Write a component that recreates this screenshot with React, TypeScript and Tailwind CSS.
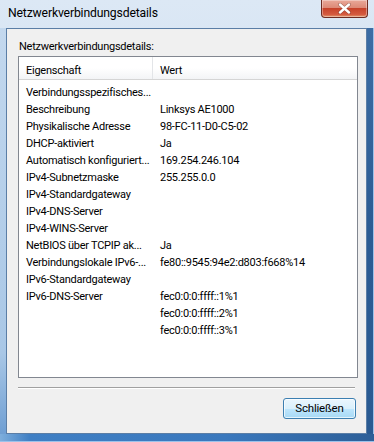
import React from "react";

const rows: [string, string][] = [
  ["Verbindungsspezifisches...", ""],
  ["Beschreibung", "Linksys AE1000"],
  ["Physikalische Adresse", "98-FC-11-D0-C5-02"],
  ["DHCP-aktiviert", "Ja"],
  ["Automatisch konfiguriert...", "169.254.246.104"],
  ["IPv4-Subnetzmaske", "255.255.0.0"],
  ["IPv4-Standardgateway", ""],
  ["IPv4-DNS-Server", ""],
  ["IPv4-WINS-Server", ""],
  ["NetBIOS über TCPIP ak...", "Ja"],
  ["Verbindungslokale IPv6-...", "fe80::9545:94e2:d803:f668%14"],
  ["IPv6-Standardgateway", ""],
  ["IPv6-DNS-Server", "fec0:0:0:ffff::1%1"],
  ["", "fec0:0:0:ffff::2%1"],
  ["", "fec0:0:0:ffff::3%1"],
];

export default function App() {
  return (
    <div
      className="w-[374px] h-[442px] flex flex-col relative overflow-hidden text-black bg-[linear-gradient(180deg,#dce8f5_0%,#cfe0f1_40%,#b7d0ea_100%)]"
      style={{ fontFamily: 'Roboto, "Liberation Sans", Arial, sans-serif' }}
    >
      {/* Title bar */}
      <div className="h-[28px] flex items-center pl-[8px] shrink-0">
        <span className="text-[12.2px] tracking-[-0.15px] leading-none text-black mt-[-1px]">Netzwerkverbindungsdetails</span>
      </div>
      {/* Close button */}
      <div className="absolute top-0 left-[321px] w-[47px] h-[18px] rounded-b-[4px] border border-t-0 border-[#6d2c22] bg-[linear-gradient(180deg,#e9a99a_0%,#dd8a77_45%,#c7432b_50%,#d45a3f_85%,#e49a6f_100%)] flex items-center justify-center shadow-[inset_0_0_0_1px_rgba(255,255,255,0.35)]">
        <svg width="13" height="11" viewBox="0 0 13 11">
          <path d="M2 1.5 L11 9.5 M11 1.5 L2 9.5" stroke="#5a2a22" strokeWidth="3.6" strokeLinecap="round" opacity="0.5" />
          <path d="M2 1.5 L11 9.5 M11 1.5 L2 9.5" stroke="#ffffff" strokeWidth="2.4" strokeLinecap="round" />
        </svg>
      </div>
      {/* Body */}
      <div className="flex flex-1 min-h-0">
        <div className="w-[6px] bg-[linear-gradient(180deg,#c3d8ee,#a9c7e6_80%,#6f9fd3)]" />
        <div className="w-[361px] border border-[#5b7ea6] bg-[#f0f0f0] flex flex-col">
          <div className="pl-[12px] pt-[10px] h-[27px] text-[11px] tracking-[-0.25px] leading-[15px]">Netzwerkverbindungsdetails:</div>
          <div className="ml-[11px] w-[340px] h-[322px] border border-[#828790] bg-white flex flex-col text-[11px] tracking-[-0.25px] leading-[17px]">
            <div className="h-[23px] flex border-b border-[#d5d5d5] bg-[linear-gradient(180deg,#ffffff_0%,#ffffff_50%,#f3f4f6_100%)]">
              <div className="w-[134px] border-r border-[#e3e5e8] pl-[7px] pt-[5px]">Eigenschaft</div>
              <div className="flex-1 pl-[7px] pt-[5px]">Wert</div>
            </div>
            <div className="pt-[4px] flex flex-col">
              {rows.map(([k, v], i) => (
                <div key={i} className="h-[17px] flex whitespace-nowrap">
                  <div className="w-[134px] pl-[7px] overflow-hidden">{k}</div>
                  <div className="flex-1 pl-[7px]">{v}</div>
                </div>
              ))}
            </div>
          </div>
          <div className="ml-[11px] w-[337px] mt-[9px] h-[2px] border-t border-[#a0a0a0] border-b border-b-white" />
          <div className="flex justify-end pr-[10px] mt-[9px]">
            <button className="w-[73px] h-[21px] rounded-[3px] border border-[#3c7fb1] text-[11.5px] tracking-[-0.2px] leading-none text-black bg-[linear-gradient(180deg,#eaf6fd_0%,#d9f0fc_50%,#bee6fd_51%,#a7d9f5_100%)] shadow-[inset_0_0_0_1px_rgba(255,255,255,0.7)]">
              Schließen
            </button>
          </div>
        </div>
        <div className="w-[7px] flex">
          <div className="w-[6px] bg-[linear-gradient(180deg,#3d6da4,#2b5c94_50%,#2a5a92)]" />
          <div className="w-[1px] bg-[#9cc2ea]" />
        </div>
      </div>
      <div className="h-[8px] shrink-0 bg-[linear-gradient(90deg,#7eaedc_0%,#3f7fc4_8%,#3a78bd_60%,#2d5f98_100%)] border-b border-[#9cc2ea]" />
    </div>
  );
}
